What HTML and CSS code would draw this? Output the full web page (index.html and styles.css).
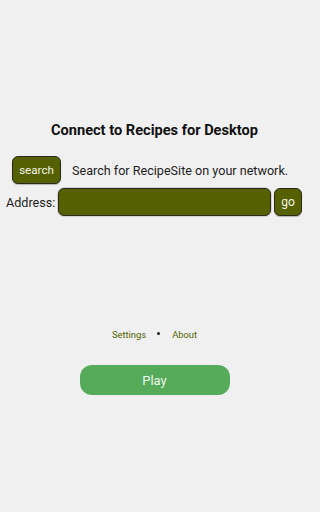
FILE: index.html
```html
<!DOCTYPE html>
<html>
<head>
<meta charset="utf-8">
<link rel="stylesheet" href="styles.css">
</head>
<body>
<main class="page">
  <h1 class="title">Connect to Recipes for Desktop</h1>
  <div class="row search-row">
    <button class="btn btn-search">search</button>
    <span class="hint">Search for RecipeSite on your network.</span>
  </div>
  <div class="row address-row">
    <label class="label">Address:</label>
    <input class="address" type="text">
    <button class="btn btn-go">go</button>
  </div>
  <nav class="links">
    <a class="link">Settings</a>
    <span class="dot"></span>
    <a class="link">About</a>
  </nav>
  <div class="play-wrap">
    <button class="play">Play</button>
  </div>
</main>
</body>
</html>
```
FILE: styles.css
```css
* { box-sizing: border-box; }
html, body {
  margin: 0;
  padding: 0;
  background: #f0f0f0;
  font-family: Roboto, "Liberation Sans", sans-serif;
}
.page {
  width: 309px;
  height: 512px;
  padding-top: 121px;
  display: flex;
  flex-direction: column;
}
.title {
  margin: 0;
  font-size: 14.6px;
  line-height: 18px;
  font-weight: 700;
  color: #111;
  text-align: center;
}
.row {
  display: flex;
  align-items: center;
}
.search-row {
  margin-top: 17px;
  padding-left: 12px;
  height: 28px;
}
.btn {
  font-family: Roboto, "Liberation Sans", sans-serif;
  background: #556100;
  color: #f4f4e8;
  border: 1.5px solid #2a2a1a;
  border-radius: 6px;
  padding: 0;
  box-shadow: 0 1px 1px rgba(0,0,0,0.25);
}
.btn-search {
  width: 49px;
  height: 28px;
  font-size: 11.6px;
}
.hint {
  margin-left: 11px;
  font-size: 12.6px;
  color: #1e1e1e;
}
.address-row {
  margin-top: 4px;
  padding-left: 6px;
  height: 28px;
}
.label {
  font-size: 12.6px;
  color: #1e1e1e;
  width: 52px;
}
.address {
  width: 213px;
  height: 28px;
  background: #556100;
  border: 1.5px solid #2a2a1a;
  border-radius: 6px;
  box-shadow: 0 0 0 1px rgba(0,0,0,0.12);
  padding: 0 6px;
  color: #fff;
}
.btn-go {
  margin-left: 3px;
  width: 28px;
  height: 28px;
  font-size: 12px;
}
.links {
  margin-top: 111px;
  display: flex;
  justify-content: center;
  align-items: center;
  height: 14px;
}
.link {
  font-size: 9.4px;
  color: #526200;
}
.dot {
  width: 3px;
  height: 3px;
  background: #111;
  border-radius: 50%;
  margin: 0 12px 2px 11px;
}
.play-wrap {
  margin-top: 24px;
  display: flex;
  justify-content: center;
}
.play {
  width: 150px;
  height: 30px;
  border: none;
  border-radius: 12px;
  background: #55ab59;
  color: #eef6ee;
  font-family: Roboto, "Liberation Sans", sans-serif;
  font-size: 13px;
}
```
